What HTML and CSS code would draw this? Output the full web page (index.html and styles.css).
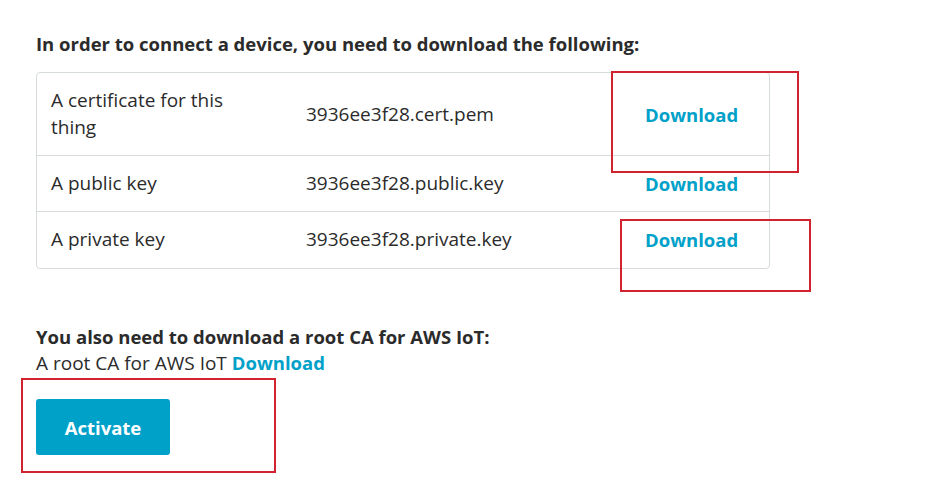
FILE: index.html
```html
<!DOCTYPE html>
<html>
<head>
<meta charset="utf-8">
<link rel="stylesheet" href="styles.css">
</head>
<body>
<div class="page">
  <h2 class="title">In order to connect a device, you need to download the following:</h2>
  <div class="files">
    <div class="row">
      <div class="cell name">A certificate for this thing</div>
      <div class="cell file">3936ee3f28.cert.pem</div>
      <div class="cell action"><a class="link" href="#">Download</a></div>
    </div>
    <div class="row">
      <div class="cell name">A public key</div>
      <div class="cell file">3936ee3f28.public.key</div>
      <div class="cell action"><a class="link" href="#">Download</a></div>
    </div>
    <div class="row">
      <div class="cell name">A private key</div>
      <div class="cell file">3936ee3f28.private.key</div>
      <div class="cell action"><a class="link" href="#">Download</a></div>
    </div>
  </div>
  <h2 class="title root-title">You also need to download a root CA for AWS IoT:</h2>
  <p class="root-line">A root CA for AWS IoT <a class="link" href="#">Download</a></p>
  <button class="activate">Activate</button>
</div>
<div class="mark mark-1"></div>
<div class="mark mark-2"></div>
<div class="mark mark-3"></div>
</body>
</html>
```
FILE: styles.css
```css
html, body {
  margin: 0;
  padding: 0;
  background: #fff;
}
body {
  font-family: "Open Sans", "Noto Sans", sans-serif;
  font-size: 19px;
  color: #2b2b2b;
  width: 940px;
  height: 484px;
  position: relative;
  overflow: hidden;
}
.page {
  padding: 32px 0 0 36px;
  width: 734px;
}
.title {
  font-size: 18.5px;
  font-weight: 700;
  line-height: 24px;
  margin: 0 0 16px 0;
}
.files {
  border: 1px solid #d5dbdb;
  border-radius: 4px;
}
.row {
  display: grid;
  grid-template-columns: 255px 339px 1fr;
  align-items: center;
  border-top: 1px solid #d5dbdb;
}
.row:first-child {
  border-top: none;
}
.row:last-child {
  padding-bottom: 1px;
}
.cell {
  padding: 14px 0 14px 14px;
  line-height: 27px;
}
.name {
  padding-right: 20px;
}
.action {
  font-size: 18.5px;
}
.link {
  color: #00a1c9;
  font-size: 18.5px;
  font-weight: 700;
  text-decoration: none;
}
.root-title {
  margin: 56px 0 0 0;
}
.root-line {
  margin: 0;
  line-height: 28px;
}
.activate {
  margin-top: 22px;
  width: 134px;
  height: 56px;
  border: none;
  border-radius: 3px;
  background: #00a1c9;
  color: #fff;
  font-family: inherit;
  font-size: 18.5px;
  font-weight: 700;
}
.mark {
  position: absolute;
  border: 2px solid #d0232f;
  box-sizing: border-box;
}
.mark-1 { left: 611px; top: 71px; width: 188px; height: 102px; }
.mark-2 { left: 620px; top: 219px; width: 191px; height: 73px; }
.mark-3 { left: 21px; top: 378px; width: 255px; height: 95px; }
```
